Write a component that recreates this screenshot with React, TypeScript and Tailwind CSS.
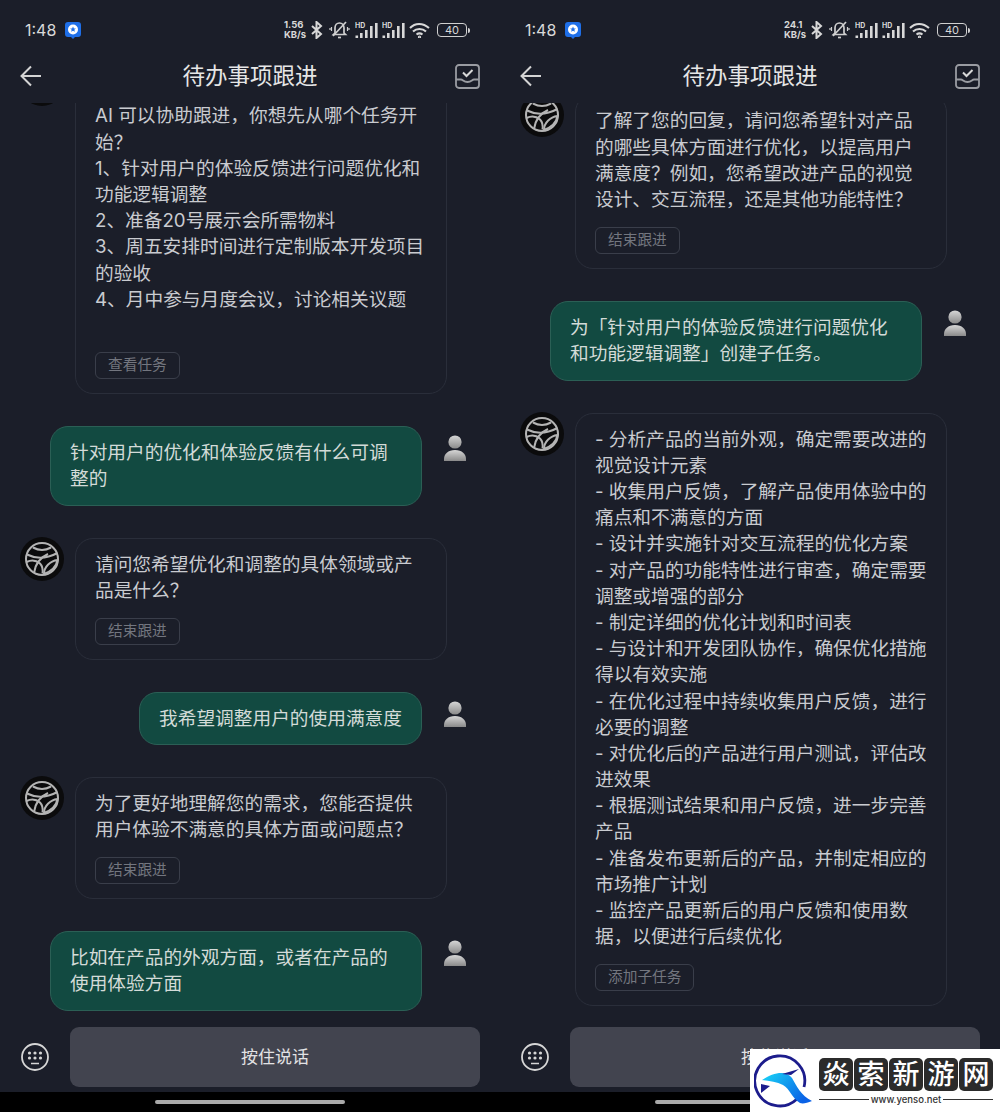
import { Fragment } from "react";

function BallAvatar() {
  return (
    <div className="w-[44px] h-[44px] shrink-0 -mt-px rounded-full bg-[#0b0b0c] flex items-center justify-center">
      <svg width="36" height="36" viewBox="0 0 36 36" fill="none" stroke="#b4b4b4" strokeWidth="2">
        <circle cx="18" cy="18" r="16" />
        <path d="M9 6.500c5.500 3 12.500 3 18 0" />
        <path d="M3 13.500c9 4.500 20 4 30.500-1.500" />
        <path d="M2.500 21c5-2.500 10-1.500 13.500 1.500 2.500 2.500 3 6 2.500 10" />
        <path d="M10 32c1-7 5-15 14-19" />
        <path d="M20 33c0-7 6-13 13.500-14-1 6-5 11-13.500 14" />
      </svg>
    </div>
  );
}

function UserAvatar() {
  return (
    <svg className="shrink-0 mt-[9px]" width="22" height="26" viewBox="0 0 22 26">
      <defs>
        <linearGradient id="userFill" x1="0" y1="0" x2="0" y2="1">
          <stop offset="0" stopColor="#d6d6d6" />
          <stop offset="1" stopColor="#8a8a8a" />
        </linearGradient>
      </defs>
      <circle cx="11" cy="7" r="6.600" fill="url(#userFill)" />
      <path d="M0 26v-2c0-5 4-9 11-9s11 4 11 9v2z" fill="url(#userFill)" />
    </svg>
  );
}

function BotMessage({ lines, action, topGap }: { lines: string[]; action: string; topGap?: boolean }) {
  return (
    <div className="flex items-start gap-[11px] pl-[20px]">
      <BallAvatar />
      <div className="w-[372px] rounded-[18px] border border-[#2a2e3a] px-[19px] pt-[13px] pb-[13.6px]">
        {topGap && <div className="h-[26.2px]" />}
        {lines.map((l, i) =>
          l ? (
            <p key={i} className="h-[26.2px] whitespace-nowrap">{l}</p>
          ) : (
            <div key={i} className="h-[25.5px]" />
          )
        )}
        <div className="mt-[14px] h-[27px] w-fit px-[12px] rounded-[6px] border border-[#3a3e4a] text-[14.7px] leading-[25px] text-[#73767f]">
          {action}
        </div>
      </div>
    </div>
  );
}

function UserMessage({ lines }: { lines: string[] }) {
  const size = lines.length > 1 ? "w-[372px] h-[80px]" : "h-[53px]";
  return (
    <div className="flex items-start justify-end gap-[22px] pr-[34px]">
      <div className={`${size} rounded-[18px] border border-[#2b5f55] bg-[#124a41] px-[19px] pt-[13px] text-[#d3dbd8]`}>
        {lines.map((l, i) => (
          <p key={i} className="h-[26.2px] whitespace-nowrap">{l}</p>
        ))}
      </div>
      <UserAvatar />
    </div>
  );
}

function Signal() {
  return (
    <svg width="23" height="18" viewBox="0 0 23 18" fill="#d8d8d8">
      <text x="0" y="6.500" fontSize="7" fontWeight="700" fontFamily="Inter, sans-serif">HD</text>
      <rect x="0.500" y="14.500" width="2.600" height="2.500" />
      <rect x="5" y="12" width="2.600" height="5" />
      <rect x="10" y="9" width="2.600" height="8" />
      <rect x="15" y="5" width="2.600" height="12" />
      <rect x="20" y="2" width="2.600" height="15" />
    </svg>
  );
}

function StatusBar({ speed }: { speed: string }) {
  return (
    <div className="h-[60px] flex items-center pl-[25px] pr-[30px]">
      <span className="text-[16px] text-[#d9d9d9] font-['Inter',sans-serif]">1:48</span>
      <svg className="ml-[9px]" width="16" height="17" viewBox="0 0 16 17">
        <path d="M3 0h10a3 3 0 0 1 3 3v9a3 3 0 0 1-3 3h-3l-2 2-2-2H3a3 3 0 0 1-3-3V3a3 3 0 0 1 3-3z" fill="#1f6fe8" />
        <circle cx="8" cy="7.500" r="5" fill="#ffffff" />
        <path d="M8 4.500l.9 2h2l-1.600 1.300.6 2L8 8.700 6.100 9.800l.6-2L5.100 6.500h2z" fill="#1f6fe8" />
      </svg>
      <div className="ml-auto flex items-center">
        <div className="w-[26px] text-[9.5px] leading-[10px] font-bold text-[#d8d8d8] font-['Inter',sans-serif]">
          <div>{speed}</div>
          <div>KB/s</div>
        </div>
        <svg className="ml-px" width="12" height="18" viewBox="0 0 12 18" fill="none" stroke="#d8d8d8" strokeWidth="2">
          <path d="M1 5l9 8-4.500 4V1L10 5l-9 8" />
        </svg>
        <svg className="ml-[6px]" width="21" height="20" viewBox="0 0 21 20" fill="none" stroke="#cfcfcf" strokeWidth="1.700">
          <path d="M6 13V8c0-3 2-5 4.500-5S15 5 15 8v5l1.500 1.500h-12z" />
          <path d="M9 17.500h3" />
          <path d="M4 16L17 2" />
          <path d="M2.500 7v4M1 8v2M18.500 7v4M20 8v2" strokeWidth="1.200" />
        </svg>
        <div className="ml-[5px] flex gap-[4px]">
          <Signal />
          <Signal />
        </div>
        <svg className="ml-[4px]" width="21" height="16" viewBox="0 0 21 16" fill="none" stroke="#d8d8d8" strokeWidth="2">
          <path d="M1 6c5-5.500 13-5.500 19 0" />
          <path d="M4 9.500c3.500-3.500 9.500-3.500 13 0" />
          <path d="M7.500 12.500c2-1.500 4-1.500 6 0" />
          <circle cx="10.500" cy="15" r="0.600" />
        </svg>
        <div className="ml-[7px] flex items-center">
          <div className="w-[30px] h-[14px] rounded-[4px] border border-[#d0d0d0] text-[11px] leading-[12px] text-center text-[#d8d8d8] font-['Inter',sans-serif]">
            40
          </div>
          <div className="ml-px w-[2px] h-[5px] rounded-r-sm bg-[#d0d0d0]" />
        </div>
      </div>
    </div>
  );
}

function NavBar() {
  return (
    <div className="h-[43px] shrink-0 flex items-center justify-between pl-[20px] pr-[20px] pb-[11px]">
      <svg width="25" height="22" viewBox="0 0 25 22" fill="none" stroke="#d4d4d4" strokeWidth="2">
        <path d="M21 11H2M11 1.500L1.500 11l9.500 9.500" />
      </svg>
      <span className="text-[22.5px] text-[#e6e6e6]">待办事项跟进</span>
      <svg width="25" height="25" viewBox="0 0 25 25" fill="none" stroke="#9a9ca2" strokeWidth="1.800">
        <rect x="1" y="1" width="23" height="23" rx="3" />
        <path d="M1 15.500h5c2 0 2.500 2.500 6.500 2.500s4.500-2.500 6.500-2.500h5" />
        <path d="M8 8.500l3.500 3.500 6-6" stroke="#d8d8d8" strokeWidth="2" />
      </svg>
    </div>
  );
}

function KeyboardIcon() {
  return (
    <svg className="shrink-0" width="28" height="28" viewBox="0 0 28 28" fill="none" stroke="#d6d6d6">
      <circle cx="14" cy="14" r="13" strokeWidth="1.800" />
      {[8.5, 14, 19.5].map((x) => (
        <Fragment key={x}>
          <circle cx={x} cy="10" r="1.600" fill="#d6d6d6" stroke="none" />
          <circle cx={x} cy="15" r="1.600" fill="#d6d6d6" stroke="none" />
        </Fragment>
      ))}
      <path d="M10 20.500h8" strokeWidth="1.500" />
    </svg>
  );
}

function Phone({
  speed,
  bottomGap,
  children,
}: {
  speed: string;
  bottomGap: string;
  children: React.ReactNode;
}) {
  return (
    <div className="w-[500px] h-[1112px] flex flex-col bg-[#1b1e29] text-[18.7px] leading-[26.2px] text-[#c9cbd0]">
      <StatusBar speed={speed} />
      <NavBar />
      <div className={`flex-1 min-h-0 overflow-hidden flex flex-col justify-end gap-[32px] ${bottomGap}`}>
        {children}
      </div>
      <div className="h-[80px] shrink-0 flex items-center gap-[21px] pl-[21px] pr-[20px] pt-[10px]">
        <KeyboardIcon />
        <div className="flex-1 h-[60px] rounded-[9px] bg-[#42444f] flex items-center justify-center pt-px text-[17px] text-[#e2e2e4]">
          按住说话
        </div>
      </div>
      <div className="h-[20px] shrink-0 bg-black flex justify-center pt-[8px]">
        <div className="w-[190px] h-[4px] rounded-full bg-[#a9a9a9]" />
      </div>
    </div>
  );
}

function Watermark() {
  return (
    <div className="absolute right-0 bottom-0 w-[250px] h-[63px] bg-white flex items-start pl-[4px] pt-[5px]">
      <svg width="58" height="56" viewBox="0 0 58 56" fill="none">
        <defs>
          <linearGradient id="wing" x1="0" y1="0" x2="1" y2="0.600">
            <stop offset="0" stopColor="#19d6f7" />
            <stop offset="1" stopColor="#0a62e6" />
          </linearGradient>
        </defs>
        <path d="M43 45a25 25 0 1 1 7-12" stroke="#1c1c8c" strokeWidth="2.800" />
        <path d="M8 26c12-8 24-10 30-2 4 7 9 18 20 23-5 2-9 3-12 2-8-5-10-14-17-18-6-3-13-4-21-5z" fill="url(#wing)" />
        <path d="M7 30l9 2-9 7zM28 20l17-5-8 6z" fill="#1c1c8c" />
      </svg>
      <div className="ml-[7px] flex flex-col">
        <div className="flex gap-px mt-[4px]">
          {["焱", "索", "新", "游", "网"].map((c) => (
            <span
              key={c}
              className="w-[34px] h-[33px] rounded-[5px] bg-[#2b2b2b] text-white text-[27px] leading-[33px] text-center font-medium"
            >
              {c}
            </span>
          ))}
        </div>
        <div className="flex items-center gap-[2px] mt-[3px] text-[9.5px] leading-[11px] text-[#333] font-['Inter',sans-serif] font-medium">
          <span className="flex-1 h-[1.5px] bg-[#333]" />
          www.yenso.net
          <span className="flex-1 h-[1.5px] bg-[#333]" />
        </div>
      </div>
    </div>
  );
}

export default function App() {
  return (
    <div className="relative w-[1000px] h-[1112px] flex overflow-hidden font-['Inter','Noto_Sans_CJK_SC',sans-serif]">
      <Phone speed="1.56" bottomGap="pb-px">
        <BotMessage
          topGap
          action="查看任务"
          lines={[
            "AI 可以协助跟进，你想先从哪个任务开",
            "始？",
            "1、针对用户的体验反馈进行问题优化和",
            "功能逻辑调整",
            "2、准备20号展示会所需物料",
            "3、周五安排时间进行定制版本开发项目",
            "的验收",
            "4、月中参与月度会议，讨论相关议题",
            "",
          ]}
        />
        <UserMessage lines={["针对用户的优化和体验反馈有什么可调", "整的"]} />
        <BotMessage action="结束跟进" lines={["请问您希望优化和调整的具体领域或产", "品是什么？"]} />
        <UserMessage lines={["我希望调整用户的使用满意度"]} />
        <BotMessage action="结束跟进" lines={["为了更好地理解您的需求，您能否提供", "用户体验不满意的具体方面或问题点？"]} />
        <UserMessage lines={["比如在产品的外观方面，或者在产品的", "使用体验方面"]} />
      </Phone>
      <Phone speed="24.1" bottomGap="pb-[6px]">
        <BotMessage
          action="结束跟进"
          lines={[
            "了解了您的回复，请问您希望针对产品",
            "的哪些具体方面进行优化，以提高用户",
            "满意度？例如，您希望改进产品的视觉",
            "设计、交互流程，还是其他功能特性？",
          ]}
        />
        <UserMessage lines={["为「针对用户的体验反馈进行问题优化", "和功能逻辑调整」创建子任务。"]} />
        <BotMessage
          action="添加子任务"
          lines={[
            "- 分析产品的当前外观，确定需要改进的",
            "视觉设计元素",
            "- 收集用户反馈，了解产品使用体验中的",
            "痛点和不满意的方面",
            "- 设计并实施针对交互流程的优化方案",
            "- 对产品的功能特性进行审查，确定需要",
            "调整或增强的部分",
            "- 制定详细的优化计划和时间表",
            "- 与设计和开发团队协作，确保优化措施",
            "得以有效实施",
            "- 在优化过程中持续收集用户反馈，进行",
            "必要的调整",
            "- 对优化后的产品进行用户测试，评估改",
            "进效果",
            "- 根据测试结果和用户反馈，进一步完善",
            "产品",
            "- 准备发布更新后的产品，并制定相应的",
            "市场推广计划",
            "- 监控产品更新后的用户反馈和使用数",
            "据，以便进行后续优化",
          ]}
        />
      </Phone>
      <Watermark />
    </div>
  );
}
